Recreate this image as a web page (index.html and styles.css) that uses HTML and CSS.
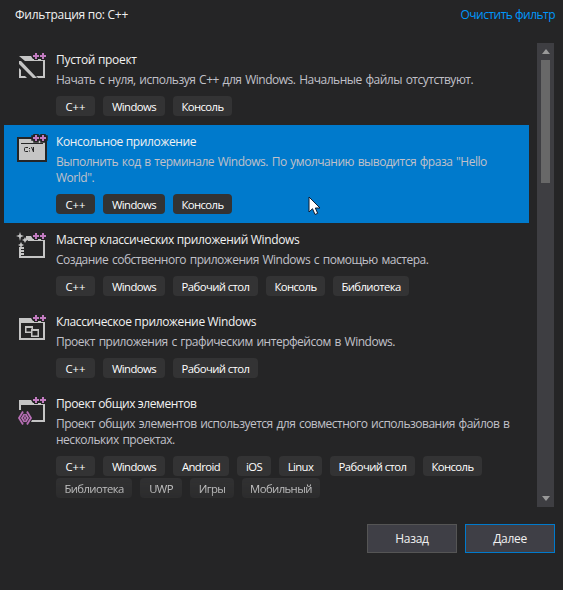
FILE: index.html
```html
<!DOCTYPE html>
<html lang="ru">
<head>
<meta charset="utf-8">
<title>Создание проекта</title>
<link rel="stylesheet" href="styles.css">
</head>
<body>
<svg class="defs" width="0" height="0">
  <symbol id="plus" viewBox="0 0 14 7" overflow="visible"><path d="M2 0h2v2h2v2H4v2H2V4H0V2h2zM9 0h2v2h2v2h-2v2H9V4H7V2h2z"/></symbol>
  <symbol id="folder" viewBox="0 0 26 22"><path fill-rule="evenodd" d="M0 0h12l2 3h12v19H0zM2 5v15h22V5z"/></symbol>
</svg>
<header class="top"><span class="filter">Фильтрация по: C++</span><a class="clear">Очистить фильтр</a></header>
<main class="pane">
  <div class="list">
    <article class="item">
      <svg class="icon" viewBox="0 0 32 32"><path class="g" d="M3 4h12l2 3h12v19h-7l-2-2h7V9H9zM3 9h2l16 17h-4L3 12zM3 16l2 2v6h4l2 2H3z"/><use class="p halo" href="#plus" x="17" y="1" width="14" height="7"/></svg>
      <div class="body">
        <h2 class="t1">Пустой проект</h2>
        <p><span class="d1">Начать с нуля, используя C++ для Windows. Начальные файлы отсутствуют.</span></p>
        <div class="tags"><span class="tag cpp">C++</span><span class="tag win">Windows</span><span class="tag con">Консоль</span></div>
      </div>
    </article>
    <article class="item selected">
      <svg class="icon" viewBox="0 0 32 32"><path class="dark" d="M1 3h30v25H1z"/><path class="g" d="M3 5h26v21H3z"/><path class="dark" d="M5 9h22v1H5z"/><use class="p halo wide" href="#plus" x="17" y="1" width="14" height="7"/><path class="line" d="M12 13.500H9.500q-1 0-1 1v2q0 1 1 1H12M13.500 14v1m0 1.500v1M15.500 13l2 5M17.500 13v5"/></svg>
      <div class="body">
        <h2 class="t2">Консольное приложение</h2>
        <p><span class="d2">Выполнить код в терминале Windows. По умолчанию выводится фраза "Hello</span><br><span class="d2b">World".</span></p>
        <div class="tags"><span class="tag cpp">C++</span><span class="tag win">Windows</span><span class="tag con">Консоль</span></div>
      </div>
      <svg class="cursor" viewBox="0 0 13 20"><path d="M1 1v15l3.500-3.300L7 18.500l2.700-1.200-2.400-5.300H12z"/></svg>
    </article>
    <article class="item">
      <svg class="icon" viewBox="0 0 32 32"><use class="g" href="#folder" x="3" y="4" width="26" height="22"/><path class="bgfill" d="M1 1h9v7h2v4H6v3H1z"/><path class="g" d="M3 15h5v2H3zM3 18h5v2H3zM3 21h5v2H3zM4 0l1 3 3 1-3 1-1 4-1-4-3-1 3-1zM9 5l1 2 2 1-2 1-1 2-1-2-2-1 2-1zM5 10l1 2 2 1-2 1-1 2-1-2-2-1 2-1z"/><use class="p halo" href="#plus" x="17" y="1" width="14" height="7"/></svg>
      <div class="body">
        <h2 class="t3">Мастер классических приложений Windows</h2>
        <p><span class="d3">Создание собственного приложения Windows с помощью мастера.</span></p>
        <div class="tags"><span class="tag cpp">C++</span><span class="tag win">Windows</span><span class="tag desk">Рабочий стол</span><span class="tag con">Консоль</span><span class="tag lib">Библиотека</span></div>
      </div>
    </article>
    <article class="item">
      <svg class="icon" viewBox="0 0 32 32"><use class="g" href="#folder" x="3" y="4" width="26" height="22"/><path class="g" fill-rule="evenodd" d="M9 12h8v3h6v8h-8v-4H9zm1.500 2v3.500H15V15h.5v-1zm6 3v4.500h5V17z"/><use class="p halo" href="#plus" x="17" y="1" width="14" height="7"/></svg>
      <div class="body">
        <h2 class="t4">Классическое приложение Windows</h2>
        <p><span class="d4">Проект приложения с графическим интерфейсом в Windows.</span></p>
        <div class="tags"><span class="tag cpp">C++</span><span class="tag win">Windows</span><span class="tag desk">Рабочий стол</span></div>
      </div>
    </article>
    <article class="item">
      <svg class="icon" viewBox="0 0 32 32"><use class="g" href="#folder" x="3" y="4" width="26" height="22"/><path class="bgfill" d="M1 14h12l4 8-4 8H1z"/><path class="shape" d="M7 15.500L3 22l4 6.500M11 15.500L15 22l-4 6.500M8.500 18L6 22l2.500 4M9.500 18L12 22l-2.500 4M9 20.500v3"/><use class="p halo" href="#plus" x="17" y="1" width="14" height="7"/></svg>
      <div class="body">
        <h2 class="t5">Проект общих элементов</h2>
        <p><span class="d5">Проект общих элементов используется для совместного использования файлов в</span><br><span class="d5b">нескольких проектах.</span></p>
        <div class="tags"><span class="tag cpp">C++</span><span class="tag win">Windows</span><span class="tag and">Android</span><span class="tag ios">iOS</span><span class="tag lin">Linux</span><span class="tag desk">Рабочий стол</span><span class="tag con">Консоль</span></div>
        <div class="tags faded"><span class="tag lib">Библиотека</span><span class="tag uwp">UWP</span><span class="tag game">Игры</span><span class="tag mob">Мобильный</span></div>
      </div>
    </article>
  </div>
  <div class="scrollbar"><i class="up"></i><i class="thumb"></i><i class="down"></i></div>
</main>
<footer class="actions"><button>Назад</button><button class="next">Далее</button></footer>
</body>
</html>
```
FILE: styles.css
```css
* { box-sizing: border-box; }
body { margin: 0; width: 563px; height: 590px; overflow: hidden; background: #252526; color: #f1f1f1; font: 12px/16px "Open Sans", "Noto Sans", sans-serif; white-space: nowrap; }
.defs { position: absolute; }
.top { height: 43px; padding: 7px 8px 0 15px; display: flex; justify-content: space-between; }
.filter { letter-spacing: -0.27px; }
.clear { color: #0097fb; letter-spacing: -0.52px; }
.pane { display: flex; height: 464px; padding-left: 4px; gap: 8px; }
.list { width: 525px; overflow: hidden; }
.item { position: relative; display: flex; padding: 9px 0 9px 12px; }
.selected { background: #007acc; }
.icon { width: 32px; height: 32px; margin-right: 8px; flex: none; }
h2 { margin: 0 0 4px; height: 16px; font-size: 12px; font-weight: 400; line-height: 16px; letter-spacing: -0.36px; }
p { margin: 0 0 8px; color: #c1c1c9; letter-spacing: -0.48px; word-spacing: 1px; }
.d5 { letter-spacing: -0.5px; }
.t1 { letter-spacing: -0.31px; }
.t5 { letter-spacing: -0.41px; }
.tags { display: flex; gap: 8px; height: 20px; }
.tag { background: #333334; color: #fff; border-radius: 4px; height: 20px; line-height: 21px; display: flex; justify-content: center; font-size: 11.3px; letter-spacing: -0.58px; }
.faded { margin-top: 2px; -webkit-mask-image: linear-gradient(#000d, #0008); mask-image: linear-gradient(#000d, #0008); }
.cpp { width: 39px; letter-spacing: 0; }
.win { width: 62px; }
.con { width: 59px; }
.desk { width: 85px; }
.lib { width: 76px; }
.and { width: 56px; }
.ios { width: 34px; }
.lin { width: 43px; }
.uwp { width: 42px; }
.game { width: 44px; }
.mob { width: 78px; }
.g { fill: #c5c5c5; }
.p { fill: #c27bc0; }
.halo { stroke: #252526; stroke-width: 2px; paint-order: stroke; }
.wide { stroke-width: 3.5px; }
.bgfill, .dark { fill: #252526; }
.line { fill: none; stroke: #252526; stroke-width: 1; }
.shape { fill: none; stroke: #b76fb5; stroke-width: 1.8; }
.cursor { position: absolute; left: 304px; top: 71px; width: 13px; height: 20px; fill: #fff; stroke: #111c30; stroke-width: 1; }
.scrollbar { width: 17px; background: #3e3e42; display: flex; flex-direction: column; align-items: center; }
.up, .down { border: solid transparent; border-width: 0 4.5px; }
.up { border-bottom: 5px solid #999; margin: 6px 0; }
.thumb { width: 9px; height: 123px; background: #686868; }
.down { border-top: 5px solid #999; margin: auto 0 6px; }
.actions { display: flex; justify-content: flex-end; gap: 8px; padding: 17px 8px 0; }
button { width: 90px; height: 29px; padding: 1px 0 0; border: 1px solid #555; background: #3f3f46; color: #f1f1f1; font: inherit; letter-spacing: -0.3px; }
.next { border-color: #007acc; }
```
